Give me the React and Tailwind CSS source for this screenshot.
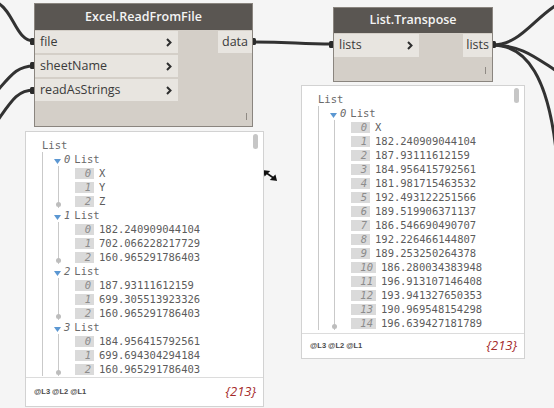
const watch1 = [
  { i: 0, items: ["X", "Y", "Z"] },
  { i: 1, items: ["182.240909044104", "702.066228217729", "160.965291786403"] },
  { i: 2, items: ["187.93111612159", "699.305513923326", "160.965291786403"] },
  { i: 3, items: ["184.956415792561", "699.694304294184", "160.965291786403"] },
];

const watch2 = [
  {
    i: 0,
    items: [
      "X",
      "182.240909044104",
      "187.93111612159",
      "184.956415792561",
      "181.981715463532",
      "192.493122251566",
      "189.519906371137",
      "186.546690490707",
      "192.226466144807",
      "189.253250264378",
      "186.280034383948",
      "196.913107146408",
      "193.941327650353",
      "190.969548154298",
      "196.639427181789",
    ],
  },
];

function Chevron() {
  return (
    <svg width="6" height="9" viewBox="0 0 6 9">
      <path d="M1 1 L4.5 4.5 L1 8" stroke="#2e2e2e" strokeWidth="2" fill="none" />
    </svg>
  );
}

function Tree({ groups }) {
  return (
    <div className="font-['DejaVu_Sans_Mono',monospace] text-[10.5px] text-[#5c5c5c] leading-[14px]">
      <div className="h-[14px] pl-[16px] text-[#6a6a6a]">List</div>
      <div className="ml-[16px] border-l border-[#c9c9c9]">
        {groups.map((g) => (
          <div key={g.i}>
            <div className="h-[14px] flex items-center pl-[11px] text-[#6a6a6a]">
              <svg width="7" height="5" viewBox="0 0 7 5" className="mt-[4px]">
                <path d="M0 0 L7 0 L3.5 5 Z" fill="#5b97d2" />
              </svg>
              <span className="ml-[3px] italic">{g.i}</span>
              <span className="ml-[4px]">List</span>
            </div>
            <div className="relative ml-[15px] border-l border-[#c9c9c9]">
              {g.items.map((v, k) => (
                <div key={k} className="h-[14px] flex items-center pl-[16px]">
                  <span
                    className={
                      "h-[11px] bg-[#dadada] text-[#8c8c8c] italic flex items-center justify-end pr-[3px] " +
                      (k > 9 ? "w-[25px]" : "w-[19px]")
                    }
                  >
                    {k}
                  </span>
                  <span className="ml-[5px]">{v}</span>
                </div>
              ))}
              <div className="absolute -left-[3px] bottom-[1px] w-[5px] h-[5px] rounded-full bg-[#bdbdbd]" />
            </div>
          </div>
        ))}
      </div>
    </div>
  );
}

function Watch({ className, contentH, groups }) {
  return (
    <div className={"absolute bg-white border border-[#d2d2d2] flex flex-col " + className}>
      <div className={"relative overflow-hidden pt-[6px] " + contentH}>
        <Tree groups={groups} />
        <div className="absolute right-[5px] top-[2px] w-[5px] h-[15px] rounded-full bg-[#c6c6c6]" />
      </div>
      <div className="flex-1 border-t border-[#dcdcdc] flex items-center justify-between pl-[8px] pr-[7px]">
        <div className="flex gap-[2px] font-['Liberation_Sans',sans-serif] font-bold text-[7.5px] text-[#4a4a4a]">
          <span>@L3</span>
          <span>@L2</span>
          <span>@L1</span>
        </div>
        <span className="font-['Open_Sans',sans-serif] italic text-[13px] text-[#a52a2a]">{"{213}"}</span>
      </div>
    </div>
  );
}

function Port({ label }) {
  return (
    <div className="h-[22px] bg-[#e8e5e0] flex items-center justify-between pl-[5px] pr-[6px]">
      <span>{label}</span>
      <Chevron />
    </div>
  );
}

export default function App() {
  return (
    <div className="relative w-[554px] h-[408px] bg-[#f5f5f5] overflow-hidden font-['Open_Sans',sans-serif]">
      <svg className="absolute inset-0" width="554" height="408" fill="none">
        <g stroke="#323232" strokeWidth="3" strokeLinecap="round">
          <path d="M-2 3 C 14 12, 16 41, 34 41" />
          <path d="M-2 90 C 12 74, 18 66, 34 66" />
          <path d="M-2 120 C 12 100, 18 90, 34 90" />
          <path d="M252 42 C 292 42, 298 44, 333 44" />
          <path d="M492 45 C 520 45, 532 20, 558 4" />
          <path d="M492 45 C 522 45, 536 58, 558 72" />
          <path d="M492 45 C 528 45, 548 80, 556 150" />
        </g>
        <g fill="#2a2a2a">
          <rect x="30" y="38" width="5" height="7" rx="1.5" />
          <rect x="30" y="62" width="5" height="7" rx="1.5" />
          <rect x="30" y="87" width="5" height="7" rx="1.5" />
          <rect x="329" y="41" width="5" height="7" rx="1.5" />
          <rect x="251" y="38" width="5" height="7" rx="1.5" />
          <rect x="491" y="41" width="5" height="7" rx="1.5" />
        </g>
        <g stroke="#111" strokeWidth="1.6" fill="#111">
          <path d="M265 172 L275 179" />
          <path d="M264 171 L268.5 171.5 L265 175 Z" />
          <path d="M276 180 L271.5 179.5 L275 176 Z" />
        </g>
      </svg>

      {/* Excel.ReadFromFile */}
      <div className="absolute left-[34px] top-[3px] w-[219px] h-[124px] bg-[#d4cfc8] border border-[#8a857f] flex flex-col text-[12.5px] text-[#3a3a3a]">
        <div className="h-[26px] bg-[#5a5652] text-[#f4f4f4] font-semibold flex items-center justify-center">
          Excel.ReadFromFile
        </div>
        <div className="flex justify-between pt-[1px]">
          <div className="w-[143px] flex flex-col gap-[2px]">
            <Port label="file" />
            <Port label="sheetName" />
            <Port label="readAsStrings" />
          </div>
          <div className="h-[22px] bg-[#e8e5e0] flex items-center px-[4px]">data</div>
        </div>
        <div className="mt-auto flex justify-end pr-[5px] pb-[6px]">
          <div className="w-[1px] h-[7px] bg-[#8f8a84]" />
        </div>
      </div>

      {/* List.Transpose */}
      <div className="absolute left-[333px] top-[7px] w-[160px] h-[75px] bg-[#d4cfc8] border border-[#8a857f] flex flex-col text-[12.5px] text-[#3a3a3a]">
        <div className="h-[25px] bg-[#5a5652] text-[#f4f4f4] font-semibold flex items-center justify-center">
          List.Transpose
        </div>
        <div className="flex justify-between pt-[1px]">
          <div className="w-[85px] h-[23px] bg-[#e8e5e0] flex items-center justify-between pl-[5px] pr-[6px]">
            <span>lists</span>
            <Chevron />
          </div>
          <div className="h-[23px] bg-[#e8e5e0] flex items-center px-[3px]">lists</div>
        </div>
        <div className="mt-auto flex justify-end pr-[6px] pb-[7px]">
          <div className="w-[1px] h-[7px] bg-[#8f8a84]" />
        </div>
      </div>

      <Watch className="left-[25px] top-[131px] w-[239px] h-[276px]" contentH="h-[245px]" groups={watch1} />
      <Watch className="left-[301px] top-[85px] w-[224px] h-[274px]" contentH="h-[247px]" groups={watch2} />
    </div>
  );
}
